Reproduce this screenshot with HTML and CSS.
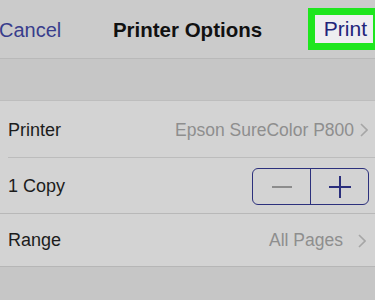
FILE: index.html
```html
<!DOCTYPE html>
<html lang="en">
<head>
    <meta charset="UTF-8">
    <meta name="viewport" content="width=device-width, initial-scale=1.0">
    <title>Printer Options</title>
    <link rel="stylesheet" href="styles.css">
</head>
<body>
    <div class="header">
        <a class="cancel" href="javascript:;">Cancel</a>
        <h1 class="title">Printer Options</h1>
        <a class="print" href="javascript:;">Print</a>
    </div>

    <div class="group">
        <div class="row inset">
            <span class="label">Printer</span>
            <span class="value">Epson SureColor P800</span>
            <svg class="chev" width="8" height="14" viewBox="0 0 8 14"><path d="M1 1l6 6-6 6" fill="none" stroke="#a6a6a6" stroke-width="1.6"/></svg>
        </div>
        <div class="row">
            <span class="label">1 Copy</span>
            <div class="stepper">
                <span class="step">
                    <svg width="22" height="4" viewBox="0 0 22 4"><path d="M1 2h20" stroke="#8c8c8c" stroke-width="2"/></svg>
                </span>
                <span class="step">
                    <svg width="24" height="24" viewBox="0 0 24 24"><path d="M1 12h22M12 1v22" stroke="#2a2e7c" stroke-width="2"/></svg>
                </span>
            </div>
        </div>
        <div class="row last">
            <span class="label">Range</span>
            <span class="value">All Pages</span>
            <svg class="chev wide" width="8" height="14" viewBox="0 0 8 14"><path d="M1 1l6 6-6 6" fill="none" stroke="#a6a6a6" stroke-width="1.6"/></svg>
        </div>
    </div>
</body>
</html>
```

FILE: styles.css
```css
* {
    margin: 0;
    padding: 0;
    box-sizing: border-box;
}
body {
    background: #c6c6c6;
    font-family: "Liberation Sans", Arial, sans-serif;
    overflow: hidden;
    height: 300px;
}
a {
    text-decoration: none;
}

/* top bar */
.header {
    display: grid;
    grid-template-columns: 1fr auto 1fr;
    align-items: center;
    height: 59px;
    background: #cbcbcb;
    border-bottom: 1px solid #b9b9b9;
}
.cancel {
    justify-self: start;
    margin-left: -1px;
    font-size: 20px;
    color: #383d8c;
    padding-top: 2px;
}
.title {
    font-size: 20.5px;
    font-weight: bold;
    color: #111;
    padding-top: 2px;
}
.print {
    justify-self: end;
    margin-right: -5px;
    height: 42px;
    padding: 0 6px 0 9px;
    border: 7px solid #1ee61e;
    background: #eeeef0;
    font-size: 21px;
    line-height: 28px;
    color: #22247a;
}

/* settings list */
.group {
    margin-top: 41px;
    background: #d3d3d3;
    border-top: 1px solid #bdbdbd;
    border-bottom: 1px solid #b6b6b6;
}
.row {
    display: flex;
    align-items: center;
    height: 56px;
    padding: 1px 6px 0 8px;
    border-bottom: 1px solid #b8b8b8;
}
.row.inset {
    height: 57px;
    border-bottom: none;
    background-image: linear-gradient(#bcbcbc, #bcbcbc);
    background-size: calc(100% - 8px) 1px;
    background-position: right bottom;
    background-repeat: no-repeat;
}
.row.last {
    border-bottom: none;
    height: 52px;
}
.label {
    flex: 1;
    font-size: 18px;
    color: #1c1c1c;
}
.value {
    font-size: 17.5px;
    color: #8e8e8e;
}
.chev {
    margin: 0 1px 0 6px;
}
.chev.wide {
    margin-left: 15px;
    margin-right: 3px;
}

/* copies stepper */
.stepper {
    display: flex;
    width: 117px;
    height: 37px;
    border: 1.5px solid #2c307c;
    border-radius: 6px;
    margin-top: 1px;
}
.step {
    flex: 1;
    display: flex;
    align-items: center;
    justify-content: center;
}
.step + .step {
    border-left: 1.5px solid #2c307c;
}
```
